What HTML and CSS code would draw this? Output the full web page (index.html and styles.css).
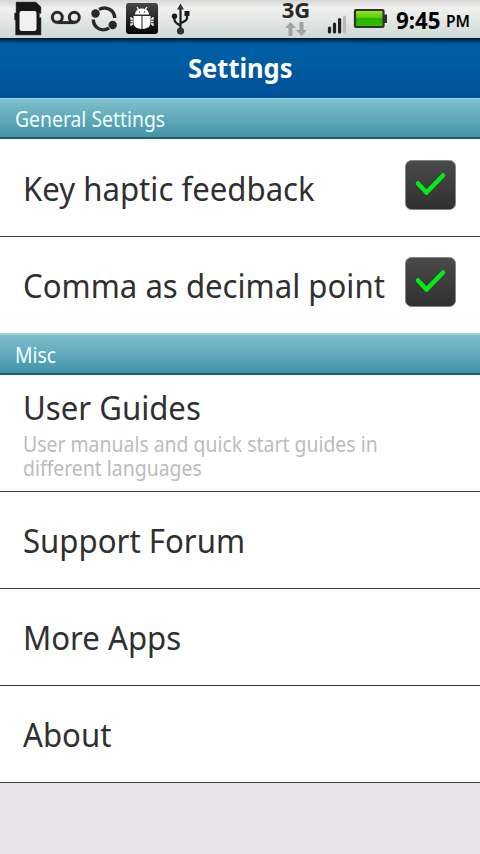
FILE: index.html
```
<!DOCTYPE html>
<html lang="en">
<head>
<meta charset="utf-8">
<title>Settings</title>
<link rel="stylesheet" href="styles.css">
</head>
<body>
<header class="status">
  <svg class="status-icons" width="200" height="38" viewBox="0 0 200 38">
    <defs><linearGradient id="ink" x1="0" y1="0" x2="0" y2="1"><stop offset="0" stop-color="#484848"/><stop offset="1" stop-color="#050505"/></linearGradient></defs>
    <path d="M16 2H36L41 7V13.500H39.500V17.500H41V35H15.500V20H14.500V13H16Z" fill="#171717" stroke="#555" stroke-opacity=".5"/>
    <rect x="19.500" y="11" width="17" height="20" rx="2" fill="#f0f1f0"/>
    <g fill="none" stroke="#292929" stroke-width="3"><circle cx="57.300" cy="17.300" r="5"/><circle cx="74.300" cy="17.300" r="5"/><path d="M57 22.600H75"/></g>
    <g fill="none" stroke="#292929" stroke-width="3.400"><path d="M99 9.500C106 5.500 114.500 10 114.700 18"/><path d="M93.300 19.500C93.500 28 102 32.500 109 28"/></g>
    <circle cx="95.500" cy="13.500" r="4.200" fill="#292929"/><circle cx="112.700" cy="25" r="4.200" fill="#292929"/>
    <rect x="126" y="3" width="32" height="31" rx="3" fill="url(#ink)"/>
    <g fill="#fff"><path d="M135 14.500C135 6.500 149 6.500 149 14.500Z"/><path d="M133.500 16H141.500V29C136 28.500 133.500 26 133.500 23ZM142.500 16H150.500V23C150.500 26 148 28.500 142.500 29Z"/></g>
    <path d="M137 7L139 10M147 7L145 10M133 19H131V17M133 21.500H130.500M133 24H131V26M151 19H153V17M151 21.500H153.500M151 24H153V26" fill="none" stroke="#fff" stroke-width="1.300"/>
    <circle cx="139.500" cy="12" r=".7" fill="#333"/><circle cx="144.500" cy="12" r=".7" fill="#333"/>
    <g fill="none" stroke="#1c1c1c" stroke-width="2.200"><path d="M180.500 8V30M174.500 17V20Q175 23 180.500 25.500M187 15V18.500Q186.500 21 180.500 23"/></g>
    <path d="M180.500 3.500L184 9.500H177Z" fill="#333"/><circle cx="174.500" cy="16.300" r="2.700" fill="#1c1c1c"/><rect x="184.500" y="11" width="5" height="5" fill="#1c1c1c"/><circle cx="180.500" cy="31" r="3.600" fill="#333"/>
  </svg>
  <div class="network">
    <span class="network-type">3G</span>
    <svg class="arrows" width="24" height="14" viewBox="0 0 24 14"><path d="M6.500 0L12 6H8.500V14H4.500V6H1ZM17.500 14L23 8H19.500V0H15.500V8H12Z" fill="#a0a3a2"/></svg>
  </div>
  <svg class="signal" width="62" height="38" viewBox="0 0 62 38">
    <defs><linearGradient id="charge" x1="0" y1="0" x2="0" y2="1"><stop offset="0" stop-color="#a5e52d"/><stop offset=".45" stop-color="#55cf00"/><stop offset=".5" stop-color="#26b500"/><stop offset="1" stop-color="#35bd00"/></linearGradient></defs>
    <g stroke-width="3.200" stroke-linecap="round" stroke="#202020"><path d="M3.500 32V28M8.500 32V24M13.600 32V19.500"/><path d="M18.500 32V17" stroke="#b7bbba"/></g>
    <rect x="29" y="10" width="28.500" height="17" rx="1" fill="url(#charge)" stroke="#303030" stroke-width="2.200"/>
    <rect x="58" y="14.500" width="3" height="8.500" fill="#303030"/>
  </svg>
  <span class="clock">9:45</span><span class="meridiem">PM</span>
</header>
<h1 class="title"><span>Settings</span></h1>
<main>
  <h2 class="section"><span>General Settings</span></h2>
  <div class="row first">
    <span class="label">Key haptic feedback</span>
    <svg class="check" width="51" height="50" viewBox="0 0 51 50"><use href="#check"/></svg>
  </div>
  <div class="row last">
    <span class="label">Comma as decimal point</span>
    <svg class="check" width="51" height="50" viewBox="0 0 51 50">
      <defs><linearGradient id="box" x1="0" y1="0" x2="0" y2="1"><stop offset="0" stop-color="#4a4a4a"/><stop offset="1" stop-color="#303030"/></linearGradient>
      <g id="check"><rect x=".5" y=".5" width="50" height="49" rx="6" fill="url(#box)" stroke="#858585"/><path d="M13 23.500L21.500 32.500L38 15.500" fill="none" stroke="#00ef13" stroke-width="4.500" stroke-linecap="round" stroke-linejoin="round"/></g></defs>
      <use href="#check"/>
    </svg>
  </div>
  <h2 class="section misc"><span>Misc</span></h2>
  <div class="row tall">
    <span class="label">User Guides</span>
    <p class="detail">User manuals and quick start guides in<br>different languages</p>
  </div>
  <div class="row"><span class="label">Support Forum</span></div>
  <div class="row"><span class="label">More Apps</span></div>
  <div class="row"><span class="label">About</span></div>
</main>
</body>
</html>
```
FILE: styles.css
```
* { box-sizing: border-box; }
body { margin: 0; width: 480px; height: 854px; overflow: hidden; background: #e8e4e7; font-family: "Noto Sans", sans-serif; color: #303030; }
svg { display: block; flex: none; }
span { white-space: nowrap; }
.status { display: flex; height: 38px; background: linear-gradient(#d5d6d4 0, #f0f1ef 8px, #e5e8e6 19px, #cfd9d5 37px); }
.network { width: 32px; margin-left: 80px; display: flex; flex-direction: column; align-items: center; }
.network-type { font-size: 22px; font-weight: 700; line-height: 18px; color: #292929; }
.arrows { margin-top: 4px; }
.signal { margin-left: 14px; }
.clock { margin-left: 8px; font-size: 24px; font-weight: 700; line-height: 39px; color: #000; transform: scaleX(.93); transform-origin: left; }
.meridiem { margin-left: 2px; font-size: 16px; font-weight: 600; line-height: 43px; color: #000; transform: scaleX(.97); transform-origin: left; }
.title { margin: 0; height: 60px; background: linear-gradient(#00131e 0, #003658 2px, #005c9c 6px, #0060a7 10px, #005196 60px); color: #fff; text-align: center; font-size: 26px; font-weight: 700; line-height: 61px; }
.title span { display: inline-block; transform: scaleX(.98); }
.section { margin: 0; height: 41px; padding-left: 15px; border-top: 1px solid #9bd5df; border-bottom: 2px solid #245d70; background: linear-gradient(#7fc0cd, #4293a8); font-size: 22px; font-weight: 400; line-height: 39px; color: #f1ffff; }
.section span { display: inline-block; transform: scaleX(.88); transform-origin: left; }
.misc { height: 42px; border-top: 2px solid #a5d0d7; }
.row { display: flex; justify-content: space-between; align-items: flex-start; height: 97px; padding: 0 24px 0 23px; background: #fff; border-bottom: 1px solid #3c3c3c; }
.label { width: 370px; font-size: 33.500px; line-height: 96px; transform: scaleX(.93); transform-origin: left; }
.check { margin-top: 21px; }
.first { height: 98px; }
.first .label { line-height: 98px; }
.last { height: 96px; border-bottom: 0; }
.last .check { margin-top: 20px; }
.tall { display: block; height: 117px; padding-top: 9px; }
.tall .label { display: block; line-height: 46px; }
.detail { margin: 1px 0 0; width: 430px; font-size: 22px; line-height: 24px; color: #bcbcbc; transform: scaleX(.882); transform-origin: left; }
```
